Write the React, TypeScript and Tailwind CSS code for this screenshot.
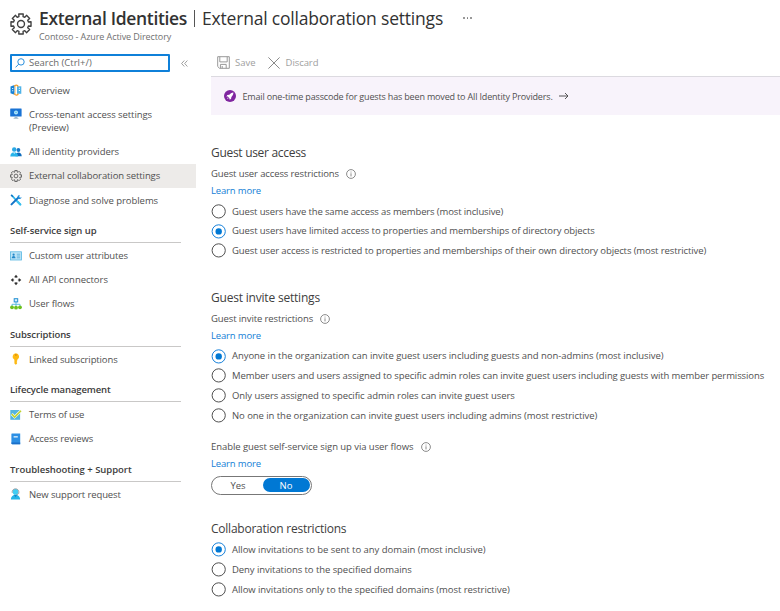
import React from 'react';

type IconProps = { className?: string };

const gearPath = (() => {
  const teeth = 8;
  const pts: string[] = [];
  for (let i = 0; i < teeth; i++) {
    const a = (i * 2 * Math.PI) / teeth - Math.PI / 2;
    const at = (r: number, d: number) => `${(12 + r * Math.cos(a + d)).toFixed(2)} ${(12 + r * Math.sin(a + d)).toFixed(2)}`;
    pts.push(at(8.4, -0.27), at(11.2, -0.22), at(11.2, 0.22), at(8.4, 0.27));
  }
  return `M${pts.join('L')}Z`;
})();

const Gear = ({ className = '' }: IconProps) => (
  <svg viewBox="0 0 24 24" className={className} fill="none" stroke="#404040" strokeWidth="1.5" strokeLinejoin="round">
    <path d={gearPath} />
    <circle cx="12" cy="12" r="3.8" />
  </svg>
);

const Overview = () => (
  <svg viewBox="0 0 12 12" className="size-3">
    <path d="M.5 2.5 4.5 1v9.8L.5 9.3Z" fill="#1683d8" />
    <path d="M2.2 4h1v1h-1zM2.2 6.3h1v1h-1z" fill="#fff" />
    <path d="M7 2.3h4.3v7.5H7z" fill="#4fb3e8" />
    <path d="M8.8 3.8h1.2v1H8.8zM8.8 6h1.2v1H8.8z" fill="#fff" />
    <path d="M4.3 2.4C4.9.9 7.6.5 8.2 2.7M4.3 9.4c.6 2.2 3.5 2.4 4 .2" fill="none" stroke="#f59b23" strokeWidth="1.3" />
    <path d="M5.2 1.8v8.6" stroke="#f7b85a" strokeWidth=".7" />
  </svg>
);

const Monitor = () => (
  <svg viewBox="0 0 12 12" className="size-3">
    <rect x=".2" y=".6" width="11.4" height="7.9" rx=".5" fill="#1a73d4" />
    <path d="M4.7 8.5h2.6l.4 2H4.3z" fill="#9db9cf" />
    <path d="M3.6 10.1h4.8v.9H3.6z" fill="#b5c3cd" />
    <circle cx="6" cy="4.4" r="2" fill="#b8e9fb" />
    <circle cx="6" cy="4.4" r=".8" fill="#5cc4ef" />
  </svg>
);

const People = () => (
  <svg viewBox="0 0 12 12" className="size-3">
    <circle cx="8.4" cy="4" r="1.9" fill="#1678c9" />
    <path d="M5.5 10.3c0-5 6.2-5 6.2 0z" fill="#0f6cbd" />
    <circle cx="4.2" cy="3.5" r="2.2" fill="#29a8e4" />
    <path d="M.3 10.4C.3 4.8 8 4.8 8 10.4z" fill="#28b4ea" />
    <path d="m3.2 6.4 1 1.5 1-1.5z" fill="#e9f8fe" />
  </svg>
);

const Tools = () => (
  <svg viewBox="0 0 12 12" className="size-3">
    <path d="m1.8 1.4 3.6 4 4.8 5" stroke="#2ab5ea" strokeWidth="1.6" strokeLinecap="round" />
    <path d="M1 1 3 2.8" stroke="#1373c4" strokeWidth="1.4" />
    <path d="m1.5 10.4 6.7-6.6" stroke="#1474c8" strokeWidth="2" strokeLinecap="round" />
    <path d="M9.7.9A2.3 2.3 0 0 0 7.4 3a2 2 0 0 0 2.2 2A2.2 2.2 0 0 0 11.6 3l-1.5.8-.9-.9z" fill="#1e8cda" />
    <path d="m7.6 7.7 2.7 2.8" stroke="#37c0ee" strokeWidth="2.2" strokeLinecap="round" />
  </svg>
);

const IdCard = () => (
  <svg viewBox="0 0 12 12" className="size-3">
    <rect x=".4" y="1.8" width="11.2" height="8.2" fill="#bfe5f7" stroke="#58b7e2" strokeWidth=".8" />
    <circle cx="3.6" cy="4.7" r="1.1" fill="#2288c9" />
    <path d="M1.7 8.3c0-3 3.8-3 3.8 0z" fill="#2288c9" />
    <path d="M6.8 4.2h3.4M6.8 6h3.4M6.8 7.8h3.4" stroke="#4fabd9" strokeWidth=".8" />
  </svg>
);

const Connectors = () => (
  <svg viewBox="0 0 12 12" className="size-3" fill="#303030">
    <path d="M6 .7 8 3.2H4zM6 11.3 8 8.8H4zM.7 6 3.2 4v4zM11.3 6 8.8 4v4z" />
    <path d="M5.5 3h1v1.1h-1zM5.5 7.9h1V9h-1zM3 5.5h1.1v1H3zM7.9 5.5H9v1H7.9z" />
  </svg>
);

const Flow = () => (
  <svg viewBox="0 0 12 12" className="size-3">
    <path d="M6 4v4M2 8.5V6.3h8v2.2" fill="none" stroke="#52b8de" strokeWidth=".9" />
    <rect x="4.2" y=".7" width="3.5" height="3.2" fill="#d8f0fb" stroke="#2390d3" strokeWidth="1" />
    <circle cx="2" cy="9.3" r="1.9" fill="#6cc11d" />
    <circle cx="6" cy="9.7" r="1.9" fill="#6cc11d" />
    <circle cx="10" cy="9.3" r="1.9" fill="#6cc11d" />
  </svg>
);

const Key = () => (
  <svg viewBox="0 0 12 12" className="size-3">
    <path d="M5.9.3a3.4 3.4 0 0 0-1.5 6.4v3.8l1.4 1.3 1.4-1.3-.6-.8.7-.8-.7-.8.7-.7v-.7A3.4 3.4 0 0 0 5.9.3Z" fill="#fdb913" />
    <circle cx="5.9" cy="2" r=".8" fill="#d07c05" />
  </svg>
);

const Terms = () => (
  <svg viewBox="0 0 12 12" className="size-3">
    <rect x=".3" y="1" width="9.8" height="9.8" fill="#55b4de" />
    <path d="M1.7 5 4.6 8 11 1.8" fill="none" stroke="#fff" strokeWidth="2.6" />
    <path d="M1.7 5 4.6 8 11 1.8" fill="none" stroke="#bfd22b" strokeWidth="1.6" />
  </svg>
);

const Book = () => (
  <svg viewBox="0 0 12 12" className="size-3">
    <path d="M1.8.6h8.4v10.6H2.4q-1 0-1-1V1q0-.4.4-.4" fill="#2c8fe4" />
    <path d="M1.4 9.6h8.8v1.6H2.4q-1 0-1-1z" fill="#1b6fc8" />
    <path d="M3.6 3.2h4.2v1.3H3.6z" fill="#e4f3fd" />
  </svg>
);

const Support = () => (
  <svg viewBox="0 0 12 12" className="size-3">
    <path d="M.9 11.6c0-6.6 9.2-6.6 9.2 0z" fill="#25b5e8" />
    <path d="m3.9 6.8 1.6 2.5 1.6-2.5z" fill="#1684c7" />
    <circle cx="5.5" cy="3.9" r="2.8" fill="#42cdf3" />
    <path d="M2.2 4.8C1.6-.5 9.4-.5 8.8 4.8 8.7 6 7.7 6.5 6.5 6.6" fill="none" stroke="#8b9297" strokeWidth=".9" />
  </svg>
);

const Info = () => (
  <svg viewBox="0 0 10 10" className="size-2.5" fill="none" stroke="#666" strokeWidth=".75">
    <circle cx="5" cy="5" r="4.4" />
    <path d="M5 4.3v3.1M5 2.6v.9" />
  </svg>
);

const NavItem = ({ icon, label, track, active = false }: { icon: React.ReactNode; label: string; track: string; active?: boolean }) => (
  <div className={`flex h-[24.25px] items-center gap-[7px] pl-2.5 ${active ? 'bg-[#edebe9]' : ''}`}>
    {icon}
    <span className={`pt-px ${track}`}>{label}</span>
  </div>
);

const NavHeading = ({ label, track }: { label: string; track: string }) => (
  <div className="ml-2.5 flex h-[31.1px] w-[171px] flex-col pt-[9.5px]">
    <div className={`h-5 leading-[17px] font-semibold text-[#3c3c3c] ${track}`}>{label}</div>
    <div className="h-px bg-[#c9c8c7]" />
  </div>
);

const Heading = ({ label, className }: { label: string; className: string }) => (
  <h2 className={`h-5 text-[12px] leading-[21px] text-[#404040] ${className}`}>{label}</h2>
);

const Field = ({ label, track, className }: { label: string; track: string; className: string }) => (
  <div className={className}>
    <div className="flex h-4 items-center gap-[7px]">
      <span className={`pt-px ${track}`}>{label}</span>
      <Info />
    </div>
    <div className="h-4 leading-[17.5px] tracking-[-0.16px] text-[#1480d6]">Learn more</div>
  </div>
);

const Radio = ({ label, track, checked = false }: { label: string; track: string; checked?: boolean }) => (
  <div className="flex h-[19.75px] items-center gap-[6px]">
    <svg viewBox="0 0 15 15" className="size-[15px]" fill="none">
      <circle cx="7.7" cy="7.4" r="6.6" stroke={checked ? '#1580da' : '#505050'} strokeWidth="1" />
      {checked && <circle cx="7.7" cy="7.4" r="3.2" fill="#0078d4" />}
    </svg>
    <span className={`pt-px ${track}`}>{label}</span>
  </div>
);

export default function App() {
  return (
    <div className="h-[611px] w-[780px] overflow-hidden bg-white font-['Open_Sans','Noto_Sans',sans-serif] text-[9.5px] whitespace-nowrap text-[#505050]">
      <header className="flex h-12 items-start pl-2.5">
        <Gear className="mt-[13px] size-[22px]" />
        <div className="ml-[7px] pt-1.5">
          <div className="flex h-6 items-center text-[17.5px] leading-6 text-[#323232]">
            <span className="font-semibold tracking-[-0.33px]">External Identities</span>
            <span className="mr-[7px] ml-[7px] h-[17px] w-px bg-[#555]" />
            <span className="tracking-[-0.2px]">External collaboration settings</span>
            <span className="ml-5 flex gap-[2px]">
              <i className="size-[1.5px] rounded-full bg-[#777]" />
              <i className="size-[1.5px] rounded-full bg-[#777]" />
              <i className="size-[1.5px] rounded-full bg-[#777]" />
            </span>
          </div>
          <div className="h-3 pt-px text-[9px] leading-3 tracking-[-0.09px] text-[#707070]">Contoso - Azure Active Directory</div>
        </div>
      </header>

      <div className="flex">
        <aside className="w-[196px] shrink-0">
          <div className="flex h-[30px] items-center">
            <div className="ml-2.5 flex h-[18px] w-[160px] items-center gap-1 rounded-[1px] border-2 border-[#0f80d9] pl-[3px] text-[#6a6a6a]">
              <svg viewBox="0 0 10 10" className="size-[10px]" fill="none" stroke="#2a8fdc" strokeWidth="1">
                <circle cx="6" cy="3.9" r="3.2" />
                <path d="M3.7 6.2.5 9.4" />
              </svg>
              <span className="pt-px">Search (Ctrl+/)</span>
            </div>
            <svg viewBox="0 0 7 7" className="ml-[11px] size-[7px]" fill="none" stroke="#777" strokeWidth=".7">
              <path d="M3.3.5.6 3.5l2.7 3M6.4.5 3.7 3.5l2.7 3" />
            </svg>
          </div>
          <nav>
            <NavItem icon={<Overview />} label="Overview" track="tracking-[-0.06px]" />
            <div className="flex h-[37.4px] gap-[7px] pt-[5.5px] pl-2.5">
              <Monitor />
              <div className="leading-[13.5px] tracking-[-0.07px]">
                Cross-tenant access settings
                <br />
                (Preview)
              </div>
            </div>
            <NavItem icon={<People />} label="All identity providers" track="tracking-[-0.05px]" />
            <NavItem icon={<Gear className="size-3" />} label="External collaboration settings" track="tracking-[-0.1px]" active />
            <NavItem icon={<Tools />} label="Diagnose and solve problems" track="tracking-[-0.05px]" />
            <NavHeading label="Self-service sign up" track="tracking-[-0.04px]" />
            <NavItem icon={<IdCard />} label="Custom user attributes" track="tracking-[-0.14px]" />
            <NavItem icon={<Connectors />} label="All API connectors" track="tracking-[-0.03px]" />
            <NavItem icon={<Flow />} label="User flows" track="tracking-[-0.1px]" />
            <NavHeading label="Subscriptions" track="tracking-[-0.11px]" />
            <NavItem icon={<Key />} label="Linked subscriptions" track="tracking-[-0.12px]" />
            <NavHeading label="Lifecycle management" track="tracking-[-0.12px]" />
            <NavItem icon={<Terms />} label="Terms of use" track="tracking-[-0.18px]" />
            <NavItem icon={<Book />} label="Access reviews" track="tracking-[-0.1px]" />
            <NavHeading label="Troubleshooting + Support" track="tracking-[-0.03px]" />
            <NavItem icon={<Support />} label="New support request" track="tracking-[-0.11px]" />
          </nav>
        </aside>

        <main className="ml-[15px] flex-1">
          <div className="flex h-7 items-center pt-px pl-1.5 text-[#a0a0a0]">
            <svg viewBox="0 0 13 13" className="size-[13px]" fill="none" stroke="#999" strokeWidth="1">
              <path d="M.7.7h11.6v11.6H2.5L.7 10.5zM2.8.7v5.2h7.4V.7M3.4 12.3V8.4h5.8v3.9M5.2 10v2.3" />
            </svg>
            <span className="ml-[5px] pt-px">Save</span>
            <svg viewBox="0 0 12 12" className="ml-3 size-3" stroke="#8a8a8a" strokeWidth="1">
              <path d="m.4.4 11.2 11.2M11.6.4.4 11.6" />
            </svg>
            <span className="ml-[6px] pt-px tracking-[-0.08px]">Discard</span>
          </div>
          <div className="flex h-[38.5px] items-center border-t border-[#dcdae0] bg-[#f8f3fb] pl-[13px]">
            <svg viewBox="0 0 12 12" className="size-3">
              <circle cx="6" cy="6" r="6" fill="#8026a0" />
              <path d="M9.4 2.4C7.5 2.6 6.3 3.5 5.3 4.8l-2 .2-.9 1.4 1.4.2 1.7 1.8.2 1.4 1.4-1 .3-1.9c1.2-1.2 1.9-2.5 2-4.5ZM3.8 7.5 3 9l1.5-.7z" fill="#fff" />
            </svg>
            <span className="ml-[6.5px] pt-px text-[9px] tracking-[-0.165px]">Email one-time passcode for guests has been moved to All Identity Providers.</span>
            <svg viewBox="0 0 10 8" className="ml-[6px] h-2 w-2.5" fill="none" stroke="#444" strokeWidth=".9">
              <path d="M0 4h9M6 1l3 3-3 3" />
            </svg>
          </div>

          <Heading label="Guest user access" className="mt-[27.5px] tracking-[-0.3px]" />
          <Field label="Guest user access restrictions" track="tracking-[-0.12px]" className="mt-1 mb-[3.4px]" />
          <Radio label="Guest users have the same access as members (most inclusive)" track="tracking-[-0.13px]" />
          <Radio label="Guest users have limited access to properties and memberships of directory objects" track="tracking-[-0.103px]" checked />
          <Radio label="Guest user access is restricted to properties and memberships of their own directory objects (most restrictive)" track="tracking-[-0.106px]" />

          <Heading label="Guest invite settings" className="mt-[26.3px] tracking-[-0.2px]" />
          <Field label="Guest invite restrictions" track="tracking-[-0.11px]" className="mt-1 mb-[3.2px]" />
          <Radio label="Anyone in the organization can invite guest users including guests and non-admins (most inclusive)" track="tracking-[-0.052px]" checked />
          <Radio label="Member users and users assigned to specific admin roles can invite guest users including guests with member permissions" track="tracking-[-0.093px]" />
          <Radio label="Only users assigned to specific admin roles can invite guest users" track="tracking-[-0.08px]" />
          <Radio label="No one in the organization can invite guest users including admins (most restrictive)" track="tracking-[-0.058px]" />

          <Field label="Enable guest self-service sign up via user flows" track="tracking-[-0.062px]" className="mt-[13.8px]" />
          <div className="mt-[5px] flex h-[19px] w-[101px] items-center rounded-full border border-[#777] p-[1.5px]">
            <span className="flex-1 pt-px text-center">Yes</span>
            <span className="h-[14px] w-[47px] rounded-full bg-[#0078d4] text-center leading-[15px] text-white">No</span>
          </div>

          <Heading label="Collaboration restrictions" className="mt-[23px] tracking-[-0.24px]" />
          <div className="mt-[2px]">
            <Radio label="Allow invitations to be sent to any domain (most inclusive)" track="tracking-[-0.045px]" checked />
            <Radio label="Deny invitations to the specified domains" track="tracking-[-0.065px]" />
            <Radio label="Allow invitations only to the specified domains (most restrictive)" track="tracking-[-0.057px]" />
          </div>
        </main>
      </div>
    </div>
  );
}
